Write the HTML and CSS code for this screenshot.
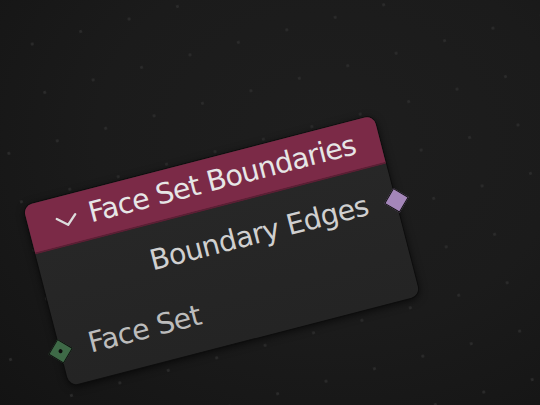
FILE: index.html
```html
<!DOCTYPE html>
<html>
<head>
<meta charset="utf-8">
<link rel="stylesheet" href="styles.css">
</head>
<body>
<div class="editor">
  <div class="canvas">
    <div class="grid"></div>
    <div class="node">
      <div class="header">
        <svg class="chevron" width="24" height="14" viewBox="0 0 24 14">
          <path d="M2.5 3 L12 11.5 L21.5 3" fill="none" stroke="#dcdcdc" stroke-width="2.4" stroke-linecap="round" stroke-linejoin="round"/>
        </svg>
        <span class="title">Face Set Boundaries</span>
      </div>
      <div class="row output">
        <span class="label">Boundary Edges</span>
        <span class="socket socket-out"></span>
      </div>
      <div class="row input">
        <span class="socket socket-in"><span class="dot"></span></span>
        <span class="label label-in">Face Set</span>
      </div>
    </div>
  </div>
</div>
</body>
</html>
```
FILE: styles.css
```css
html, body {
  margin: 0;
  padding: 0;
}
body {
  width: 540px;
  height: 405px;
  overflow: hidden;
  background: #161616;
  font-family: "DejaVu Sans", "Liberation Sans", sans-serif;
}
.editor {
  position: relative;
  width: 540px;
  height: 405px;
  overflow: hidden;
  background: radial-gradient(ellipse 520px 420px at 330px 140px, #1e1e1e 0%, #1b1b1b 45%, #151515 80%, #111111 100%);
}
.canvas {
  position: absolute;
  left: 23px;
  top: 206px;
  width: 0;
  height: 0;
  transform: rotate(-14.5deg);
  transform-origin: 0 0;
}
.grid {
  position: absolute;
  left: -602px;
  top: -606px;
  width: 1600px;
  height: 1600px;
  background-image: radial-gradient(circle at 1.5px 1.5px, #2b2b2b 0, #2b2b2b 1.2px, transparent 1.8px);
  background-size: 50px 50px;
  background-position: 0 0;
}
.node {
  position: absolute;
  left: 0;
  top: 0;
  width: 362px;
  border-radius: 9px;
  background: linear-gradient(180deg, #282828 0%, #242424 100%);
  box-shadow: 0 0 0 1px #0e0e0e, 0 2px 8px rgba(0, 0, 0, 0.7);
  padding-bottom: 20px;
}
.header {
  height: 48px;
  border-bottom: 2px solid #5a1f34;
  background: #7b2a47;
  border-radius: 9px 9px 0 0;
  display: flex;
  align-items: center;
  padding-left: 27px;
}
.chevron {
  flex: none;
  margin-top: 2px;
}
.title {
  margin-left: 11px;
  font-size: 28.5px;
  letter-spacing: -0.8px;
  line-height: 48px;
  color: #e6e6e6;
  white-space: nowrap;
}
.row {
  position: relative;
  display: flex;
  height: 32px;
  align-items: center;
  font-size: 28.5px;
  letter-spacing: -0.6px;
  line-height: 32px;
  white-space: nowrap;
}
.output {
  margin-top: 20px;
  justify-content: flex-end;
  padding-right: 28px;
}
.input {
  margin-top: 32px;
  padding-left: 29px;
}
.label {
  color: #d0d0d0;
}
.label-in {
  color: #bcbcbc;
}
.socket {
  position: absolute;
  width: 16px;
  height: 16px;
  transform: rotate(45deg);
  border: 1.5px solid #101010;
  box-sizing: content-box;
}
.socket-out {
  right: -9.5px;
  top: 9px;
  background: #a486b9;
}
.socket-in {
  left: -9.5px;
  top: 7px;
  background: #3e6a47;
  display: flex;
  align-items: center;
  justify-content: center;
}
.dot {
  width: 4.5px;
  height: 4.5px;
  border-radius: 50%;
  background: #0c0c0c;
}
```
